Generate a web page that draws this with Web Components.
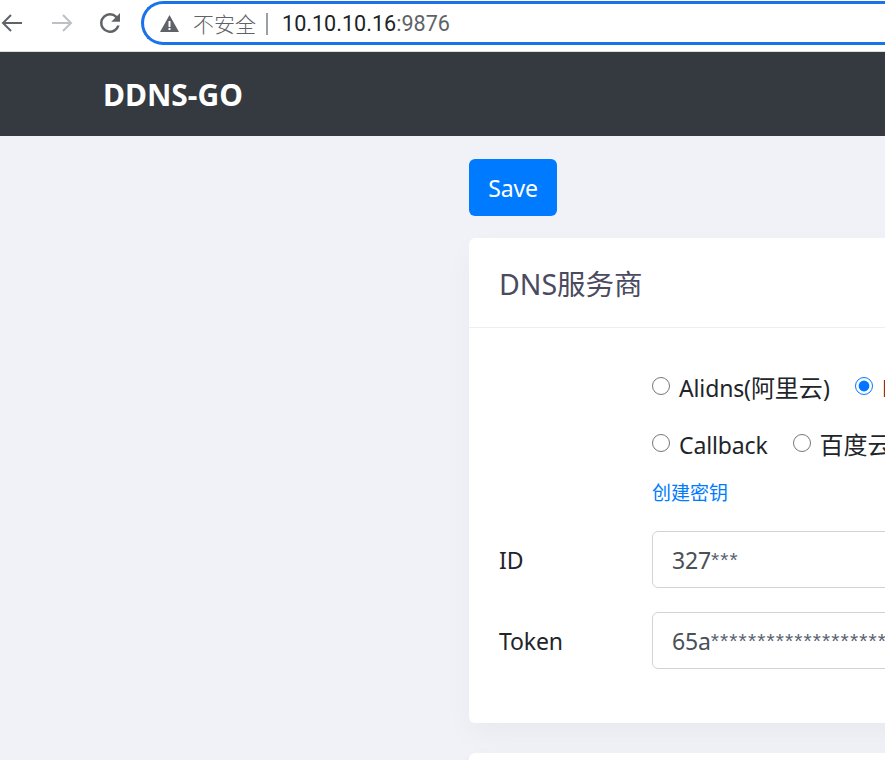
<!DOCTYPE html>
<html lang="zh">
<head>
<meta charset="utf-8">
<title>DDNS-GO</title>
<style>
  html, body { margin: 0; height: 100%; overflow: hidden; }
  body {
    background: #f1f2f7;
    color: #212529;
    font: 23px/36px "Noto Sans", "Noto Sans CJK SC", sans-serif;
    letter-spacing: -.14px;
  }
  .cjk { font-size: 24px; letter-spacing: 0; }
  .stars { font-family: "Liberation Sans", sans-serif; font-size: 21px; letter-spacing: 1.1px; color: #5a6270; }
</style>
</head>
<body>
<browser-toolbar host-part="10.10.10.16" port-part=":9876"></browser-toolbar>
<app-navbar>DDNS-GO</app-navbar>
<app-main>
  <app-button>Save</app-button>
  <app-card>
    <span slot="title">DNS服务商</span>
    <form-row>
      <radio-group>
        <radio-option name="dns">Alidns(<span class="cjk">阿里云</span>)</radio-option>
        <radio-option name="dns" checked><span style="color:#7a1f1f">Dnspod</span></radio-option>
      </radio-group>
      <radio-group>
        <radio-option name="dns">Callback</radio-option>
        <radio-option name="dns"><span class="cjk">百度云</span></radio-option>
      </radio-group>
      <help-link>创建密钥</help-link>
    </form-row>
    <form-row label="ID"><text-field>327<span class="stars">***</span></text-field></form-row>
    <form-row label="Token"><text-field>65a<span class="stars">*****************************</span></text-field></form-row>
  </app-card>
  <app-card empty></app-card>
</app-main>

<script>
class BrowserToolbar extends HTMLElement {
  constructor() {
    super();
    this.attachShadow({ mode: 'open' });
    this.shadowRoot.innerHTML = `
      <style>
        :host {
          display: flex;
          align-items: center;
          height: 51px;
          background: #fff;
          border-bottom: 1px solid #dadce0;
          letter-spacing: 0;
        }
        svg { display: block; flex: none; }
        .nav { flex: none; display: flex; align-items: center; margin-top: -6px; width: 141px; }
        .fwd { margin-left: 26px; }
        .reload { margin-left: 21px; margin-top: 1px; }
        .omni {
          flex: none;
          width: 900px;
          height: 44px;
          margin-top: -5px;
          padding: 1px 0 0 16px;
          border: 3px solid #1a73e8;
          border-right: 0;
          border-radius: 25px 0 0 25px;
          box-sizing: border-box;
          display: flex;
          align-items: center;
          font: 300 21px/1 "Noto Sans CJK SC", sans-serif;
          color: #5f6368;
          white-space: nowrap;
        }
        .sep { width: 2px; height: 22px; background: #9aa0a6; margin: 0 14px 0 10px; }
        .warn { margin-right: 14px; }
        .url { font: 21.6px/1 Roboto, sans-serif; color: #202124; }
        .url span { color: #5f6368; }
      </style>
      <div class="nav">
        <svg width="24" height="24" viewBox="0 0 24 24" fill="none" stroke="#5f6368" stroke-width="2"><path d="M22 12H3M11 4l-8 8 8 8"/></svg>
        <svg class="fwd" width="24" height="24" viewBox="0 0 24 24" fill="none" stroke="#bdc1c6" stroke-width="2"><path d="M2 12h19M13 4l8 8-8 8"/></svg>
        <svg class="reload" width="30" height="30" viewBox="0 0 24 24" fill="#5f6368"><path d="M17.65 6.35A7.96 7.96 0 0 0 12 4a8 8 0 1 0 7.73 10h-2.08A6 6 0 1 1 12 6c1.66 0 3.14.69 4.22 1.78L13 11h7V4l-2.35 2.35z"/></svg>
      </div>
      <div class="omni">
        <svg class="warn" width="19" height="17" viewBox="0 0 19 17" fill="#5f6368"><path d="M9.5 0 19 17H0zM8.5 6v6h2V6zm0 7v2h2v-2z" fill-rule="evenodd"/></svg>
        <span>不安全</span><i class="sep"></i>
        <span class="url">${this.getAttribute('host-part')}<span>${this.getAttribute('port-part')}</span></span>
      </div>`;
  }
}

class AppNavbar extends HTMLElement {
  constructor() {
    super();
    this.attachShadow({ mode: 'open' });
    this.shadowRoot.innerHTML = `
      <style>
        :host {
          display: flex;
          align-items: center;
          height: 84px;
          box-sizing: border-box;
          padding: 2px 0 0 103px;
          background: #343a40;
          color: #fff;
          font-weight: 700;
          font-size: 30px;
          letter-spacing: 0;
        }
      </style>
      <slot></slot>`;
  }
}

class AppMain extends HTMLElement {
  constructor() {
    super();
    this.attachShadow({ mode: 'open' });
    this.shadowRoot.innerHTML = `
      <style>
        :host {
          display: flex;
          flex-direction: column;
          align-items: flex-start;
          gap: 22px;
          padding: 23px 0 0 469px;
        }
      </style>
      <slot></slot>`;
  }
}

class AppButton extends HTMLElement {
  constructor() {
    super();
    this.attachShadow({ mode: 'open' });
    this.shadowRoot.innerHTML = `
      <style>
        :host { display: block; }
        button {
          display: block;
          width: 88px;
          height: 57px;
          padding: 0;
          border: 0;
          border-radius: 6px;
          background: #007bff;
          color: #fff;
          font: inherit;
          letter-spacing: inherit;
        }
      </style>
      <button type="button"><slot></slot></button>`;
  }
}

class AppCard extends HTMLElement {
  constructor() {
    super();
    this.attachShadow({ mode: 'open' });
    this.shadowRoot.innerHTML = `
      <style>
        :host {
          display: block;
          width: 760px;
          background: #fff;
          border-radius: 6px;
          box-shadow: 0 12px 30px rgba(33, 37, 41, .035);
        }
        :host([empty]) { height: 120px; margin-top: 8px; }
        :host([empty]) header, :host([empty]) .body { display: none; }
        header {
          height: 90px;
          box-sizing: border-box;
          display: flex;
          align-items: center;
          padding: 3px 0 0 30px;
          border-bottom: 1px solid #eceef1;
          font-size: 28.5px;
          letter-spacing: 0;
          color: #4a4a60;
        }
        .body {
          display: flex;
          flex-direction: column;
          gap: 24px;
          padding: 42px 30px 54px;
        }
      </style>
      <header><slot name="title"></slot></header>
      <div class="body"><slot></slot></div>`;
  }
}

class FormRow extends HTMLElement {
  constructor() {
    super();
    this.attachShadow({ mode: 'open' });
    this.shadowRoot.innerHTML = `
      <style>
        :host {
          display: grid;
          grid-template-columns: 153px 1fr;
          align-items: center;
        }
        .control { display: flex; flex-direction: column; }
      </style>
      <label>${this.getAttribute('label') || ''}</label>
      <div class="control"><slot></slot></div>`;
  }
}

class RadioGroup extends HTMLElement {
  constructor() {
    super();
    this.attachShadow({ mode: 'open' });
    this.shadowRoot.innerHTML = `
      <style>
        :host {
          display: flex;
          gap: 25px;
          height: 57px;
          white-space: nowrap;
        }
      </style>
      <slot></slot>`;
  }
}

class RadioOption extends HTMLElement {
  constructor() {
    super();
    this.attachShadow({ mode: 'open' });
    const checked = this.hasAttribute('checked') ? 'checked' : '';
    this.shadowRoot.innerHTML = `
      <style>
        :host { display: block; }
        label { display: flex; gap: 9px; line-height: 36px; }
        input { width: 18px; height: 18px; margin: 7px 0 0; flex: none; }
      </style>
      <label>
        <input type="radio" name="${this.getAttribute('name')}" ${checked}>
        <span><slot></slot></span>
      </label>`;
  }
}

class HelpLink extends HTMLElement {
  constructor() {
    super();
    this.attachShadow({ mode: 'open' });
    this.shadowRoot.innerHTML = `
      <style>
        :host { display: block; height: 25px; margin-top: -2px; font-size: 19px; line-height: 22px; letter-spacing: 0; }
        a { color: #007bff; text-decoration: none; }
      </style>
      <a href="#"><slot></slot></a>`;
  }
}

class TextField extends HTMLElement {
  constructor() {
    super();
    this.attachShadow({ mode: 'open' });
    this.shadowRoot.innerHTML = `
      <style>
        :host {
          display: flex;
          align-items: center;
          height: 57px;
          box-sizing: border-box;
          padding-left: 19px;
          border: 1px solid #ced4da;
          border-radius: 6px;
          background: #fff;
          color: #495057;
          white-space: nowrap;
          overflow: hidden;
        }
      </style>
      <slot></slot>`;
  }
}

customElements.define('browser-toolbar', BrowserToolbar);
customElements.define('app-navbar', AppNavbar);
customElements.define('app-main', AppMain);
customElements.define('app-button', AppButton);
customElements.define('app-card', AppCard);
customElements.define('form-row', FormRow);
customElements.define('radio-group', RadioGroup);
customElements.define('radio-option', RadioOption);
customElements.define('help-link', HelpLink);
customElements.define('text-field', TextField);
</script>
</body>
</html>
